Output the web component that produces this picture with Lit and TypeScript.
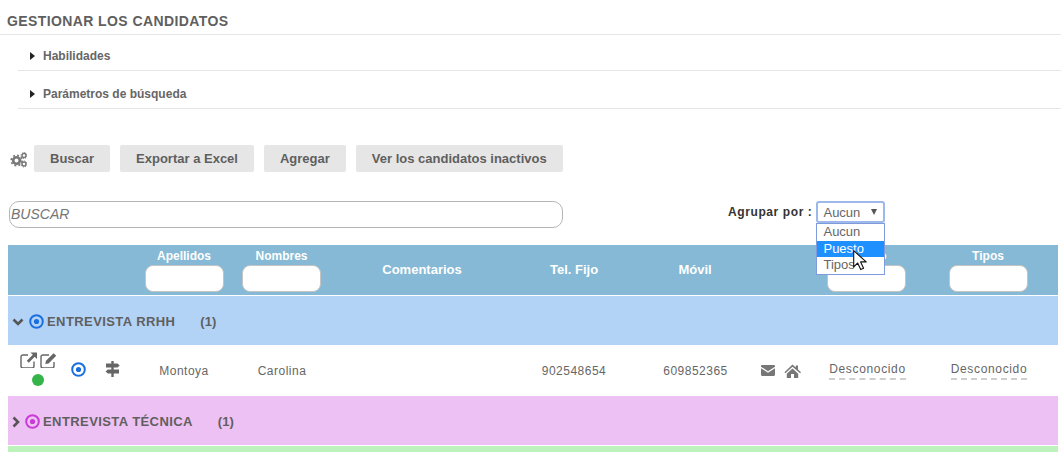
import { LitElement, html, css, svg } from "lit";
import { customElement } from "lit/decorators.js";

const externalLink = svg`<path d="M8 3H3a2 2 0 0 0-2 2v9a2 2 0 0 0 2 2h9a2 2 0 0 0 2-2V9.5" fill="none" stroke="currentColor" stroke-width="1.4"/><path d="M10.5 0.5H17V7l-2.3-2.3-6 6-1.9-1.9 6-6z" fill="currentColor"/>`;
const editIcon = svg`<path d="M9 3H3a2 2 0 0 0-2 2v9a2 2 0 0 0 2 2h9a2 2 0 0 0 2-2v-4" fill="none" stroke="currentColor" stroke-width="1.4"/><path d="M13.6 1.2l2.6 2.6-7.6 7.6-3.3.7.7-3.3z" fill="currentColor"/>`;
const signs = svg`<path d="M6.3 0h2.4v16H6.3z" fill="currentColor"/><path d="M1 2.5h11.5l2.2 2-2.2 2H1zM2.8 8.5H14v4H2.8L.6 10.5z" fill="currentColor"/>`;
const mail = svg`<path d="M0 1.2C0 .5.5 0 1.2 0h11.6c.7 0 1.2.5 1.2 1.2v.5L7 6.3 0 1.7zM0 3.2l7 4.6 7-4.6v6.6c0 .7-.5 1.2-1.2 1.2H1.2C.5 11 0 10.5 0 9.8z" fill="currentColor"/>`;
const home = svg`<path d="M8.5 0.5l3.3 3V1.5h2.2v4l3 2.7-.9 1L8.5 2.8 1.4 9.2l-.9-1z" fill="currentColor"/><path d="M2.8 9.7L8.5 4.5l5.7 5.2V14H10v-4H7v4H2.8z" fill="currentColor"/>`;
const cogs = svg`
  <circle cx="6.5" cy="8.5" r="3.3" fill="none" stroke="currentColor" stroke-width="2.6"/>
  <circle cx="6.5" cy="8.5" r="5.3" fill="none" stroke="currentColor" stroke-width="1.6" stroke-dasharray="2 2.16"/>
  <circle cx="14" cy="3.5" r="2" fill="none" stroke="currentColor" stroke-width="1.4"/>
  <circle cx="14" cy="3.5" r="3" fill="none" stroke="currentColor" stroke-width="1" stroke-dasharray="1.2 1.15"/>
  <circle cx="14" cy="12" r="2" fill="none" stroke="currentColor" stroke-width="1.4"/>
  <circle cx="14" cy="12" r="3" fill="none" stroke="currentColor" stroke-width="1" stroke-dasharray="1.2 1.15"/>`;

const icon = (w: number, h: number, body: unknown, cls = "") =>
  html`<svg class=${cls} width=${w} height=${h} viewBox="0 0 ${w} ${h}">${body}</svg>`;

const target = (cls: string) =>
  html`<svg class="target ${cls}" width="15" height="15" viewBox="0 0 15 15">
    <circle cx="7.5" cy="7.5" r="6.3" fill="none" stroke="currentColor" stroke-width="2"/>
    <circle cx="7.5" cy="7.5" r="2.6" fill="currentColor"/>
  </svg>`;

const columns = [
  { label: "Apellidos", input: true },
  { label: "Nombres", input: true },
  { label: "Comentarios", input: false },
  { label: "Tel. Fijo", input: false },
  { label: "Móvil", input: false },
  { label: "", input: false },
  { label: "Puesto", input: true },
  { label: "Tipos", input: true },
];

@customElement("app-root")
export class AppRoot extends LitElement {
  static styles = css`
    :host {
      display: block;
      width: 1061px;
      height: 452px;
      overflow: hidden;
      background: #fff;
      font-family: "Liberation Sans", Arial, sans-serif;
      font-size: 12px;
      letter-spacing: 0.5px;
      color: #666;
    }
    .title {
      height: 35px;
      box-sizing: border-box;
      display: flex;
      align-items: center;
      padding: 7px 0 0 7px;
      border-bottom: 1px solid #e6e6e6;
      font-size: 14px;
      font-weight: 700;
      color: #5f5f5f;
      letter-spacing: 0.4px;
    }
    .section {
      margin-left: 18px;
      display: flex;
      align-items: center;
      box-sizing: border-box;
      border-bottom: 1px solid #e6e6e6;
      font-weight: 700;
      color: #666;
      padding-left: 12px;
      gap: 8px;
      letter-spacing: 0;
    }
    .s1 { height: 36px; padding-top: 6px; }
    .s2 { height: 38px; padding-top: 8px; }
    .tri {
      width: 0;
      height: 0;
      border-left: 5px solid #222;
      border-top: 4px solid transparent;
      border-bottom: 4px solid transparent;
    }
    .toolbar {
      display: flex;
      align-items: center;
      margin: 36px 0 0 10px;
    }
    .cog { color: #777; margin-right: 7px; margin-top: 2px; }
    .btn {
      height: 27px;
      display: flex;
      align-items: center;
      padding: 0 16px;
      margin-right: 10px;
      background: #e6e6e6;
      border-radius: 2px;
      font-size: 13px;
      font-weight: 700;
      color: #5f5f5f;
      letter-spacing: 0;
    }
    .filters {
      display: flex;
      align-items: flex-start;
      margin-top: 29px;
      padding-left: 9px;
    }
    .search {
      width: 554px;
      height: 27px;
      box-sizing: border-box;
      border: 1px solid #b5b5b5;
      border-radius: 10px;
      display: flex;
      align-items: center;
      padding: 0 0 1px 1px;
      font-size: 14px;
      font-style: italic;
      color: #757575;
      letter-spacing: 0;
    }
    .group {
      margin-left: 165px;
      display: flex;
      align-items: center;
      height: 22px;
      font-weight: 700;
      color: #333;
      gap: 4px;
      letter-spacing: 0.6px;
    }
    .select {
      position: relative;
      width: 69px;
      height: 22px;
      box-sizing: border-box;
      border: 2px solid #9db8ea;
      border-radius: 3px;
      display: flex;
      align-items: center;
      justify-content: space-between;
      padding: 0 6px 0 5px;
      font-weight: 400;
      font-size: 13px;
      letter-spacing: 0;
      color: #666;
      background: #fff;
    }
    .caret {
      width: 0;
      height: 0;
      border-top: 6px solid #555;
      border-left: 3.5px solid transparent;
      border-right: 3.5px solid transparent;
    }
    .menu {
      position: absolute;
      left: -2px;
      top: 20px;
      width: 69px;
      box-sizing: border-box;
      border: 1px solid #7f9bdc;
      background: #fff;
      z-index: 2;
    }
    .opt { height: 16.7px; line-height: 16px; padding-left: 6px; }
    .opt.on { background: #1e90ff; color: #fff; }
    .cursor { position: absolute; left: 35px; top: 47px; z-index: 3; }
    .table { margin: 17px 3px 0 8px; }
    .head, .row {
      display: grid;
      grid-template-columns: 127px 98px 97px 184px 120px 122px 50px 121px 122px 9px;
    }
    .head {
      height: 51px;
      box-sizing: border-box;
      background: #85b9d5;
      border-bottom: 1px solid #fff;
      color: #fff;
      font-weight: 700;
      font-size: 13px;
      letter-spacing: 0;
    }
    .hcell {
      display: flex;
      flex-direction: column;
      align-items: center;
      justify-content: center;
    }
    .hcell.stack { justify-content: flex-start; padding-top: 4px; font-size: 12px; }
    .hcell span { height: 16px; line-height: 15px; }
    .hinput {
      width: 79px;
      height: 27px;
      box-sizing: border-box;
      background: #fff;
      border: 1px solid #c4c4c4;
      border-radius: 8px;
    }
    .grp {
      display: flex;
      align-items: center;
      font-size: 13px;
      font-weight: 700;
      color: #5f5f5f;
      padding-top: 2px;
      box-sizing: border-box;
      letter-spacing: 0.42px;
    }
    .blue { height: 49px; background: #b3d3f6; }
    .pink { height: 49px; background: #edc1f3; }
    .green { height: 6px; background: #bdf2bd; margin-top: 1px; }
    .grp .count { margin-left: 25px; letter-spacing: 0; }
    .target { flex: none; }
    .t-blue { color: #1a6fe0; }
    .t-pink { color: #c93ad6; }
    .chev { flex: none; color: #555; margin-left: 4px; }
    .blue .chev { margin-right: 5px; }
    .blue .target { margin-right: 3px; }
    .pink .chev { margin-right: 4px; }
    .pink .target { margin-right: 3px; }
    .row {
      height: 51px;
      align-items: center;
      justify-items: center;
      color: #666;
    }
    .acts {
      justify-self: stretch;
      height: 51px;
      display: grid;
      grid-template-columns: 53px 34px 35px;
      align-items: center;
      color: #666;
    }
    .links {
      display: flex;
      flex-wrap: wrap;
      justify-content: flex-end;
      gap: 0 2px;
      width: 49px;
      align-self: start;
      padding-top: 7px;
    }
    .dot {
      width: 12px;
      height: 12px;
      border-radius: 50%;
      background: #35b44a;
      margin: 6px 13px 0 0;
    }
    .center { justify-self: center; }
    .contact { display: flex; align-items: center; gap: 9px; color: #777; }
    .shift { padding-left: 1px; }
    .unk {
      border-bottom: 2px dashed #cfcfcf;
      line-height: 15px;
      padding-bottom: 1px;
      margin-left: 2px;
      letter-spacing: 0.65px;
    }
  `;

  render() {
    return html`
      <div class="title">GESTIONAR LOS CANDIDATOS</div>
      <div class="section s1"><i class="tri"></i>Habilidades</div>
      <div class="section s2"><i class="tri"></i>Parámetros de búsqueda</div>

      <div class="toolbar">
        ${icon(17, 16, cogs, "cog")}
        <div class="btn">Buscar</div>
        <div class="btn">Exportar a Excel</div>
        <div class="btn">Agregar</div>
        <div class="btn">Ver los candidatos inactivos</div>
      </div>

      <div class="filters">
        <div class="search">BUSCAR</div>
        <div class="group">
          Agrupar por :
          <div class="select">
            Aucun<i class="caret"></i>
            <div class="menu">
              <div class="opt">Aucun</div>
              <div class="opt on">Puesto</div>
              <div class="opt">Tipos</div>
            </div>
            <svg class="cursor" width="14" height="21" viewBox="0 0 14 21">
              <path d="M.7.7v16.2l4-3.9 3 6.6 2.9-1.3-3-6.4h5.6z" fill="#fff" stroke="#111" stroke-width="1.1" stroke-linejoin="round"/>
            </svg>
          </div>
        </div>
      </div>

      <div class="table">
        <div class="head">
          <div></div>
          ${columns.map(
            (c) => html`<div class="hcell ${c.input ? "stack" : ""}">
              <span>${c.label}</span>
              ${c.input ? html`<div class="hinput"></div>` : ""}
            </div>`
          )}
          <div></div>
        </div>

        <div class="grp blue">
          <svg class="chev" width="12" height="8" viewBox="0 0 12 8"><path d="M1.5 1.5L6 6l4.5-4.5" fill="none" stroke="currentColor" stroke-width="2.6"/></svg>
          ${target("t-blue")}
          <span>ENTREVISTA RRHH</span><span class="count">(1)</span>
        </div>

        <div class="row">
          <div class="acts">
            <div class="links">
              ${icon(18, 16, externalLink)}
              ${icon(17, 16, editIcon)}
              <i class="dot"></i>
            </div>
            <div class="center">${target("t-blue")}</div>
            <div class="center">${icon(15, 16, signs)}</div>
          </div>
          <div>Montoya</div>
          <div class="shift">Carolina</div>
          <div></div>
          <div>902548654</div>
          <div class="shift">609852365</div>
          <div class="contact">${icon(14, 11, mail)}${icon(17, 14, home)}</div>
          <div class="unk">Desconocido</div>
          <div class="unk">Desconocido</div>
          <div></div>
        </div>

        <div class="grp pink">
          <svg class="chev" width="9" height="12" viewBox="0 0 9 12"><path d="M1.5 1.5L6 6l-4.5 4.5" fill="none" stroke="currentColor" stroke-width="2.6"/></svg>
          ${target("t-pink")}
          <span>ENTREVISTA TÉCNICA</span><span class="count">(1)</span>
        </div>
        <div class="green"></div>
      </div>
    `;
  }
}
